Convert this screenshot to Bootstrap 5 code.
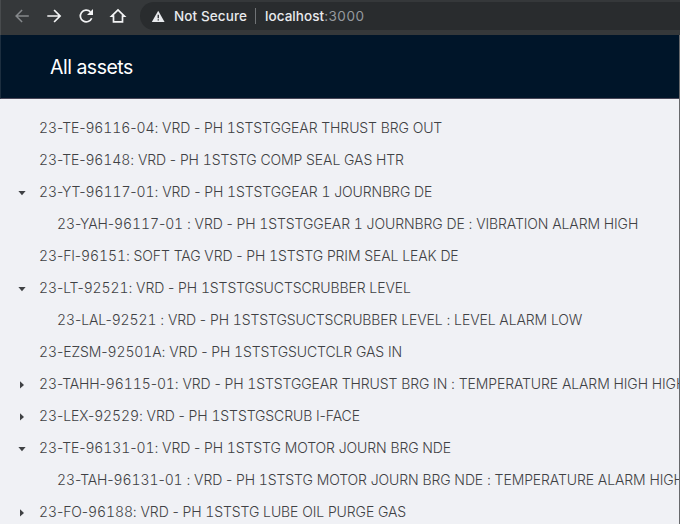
<!DOCTYPE html>
<html lang="en">
<head>
<meta charset="utf-8">
<meta name="viewport" content="width=device-width, initial-scale=1">
<title>All assets</title>
<link href="https://cdn.jsdelivr.net/npm/bootstrap@5.3.0/dist/css/bootstrap.min.css" rel="stylesheet">
<style>
body { font-family: Inter, "Liberation Sans", sans-serif; background: #f0f1f5; height: 524px; }
.browser-bar { height: 35px; background: #35383a; border-left: 1px solid #484b4d; padding: 2px 0 5px 10px; }
.browser-bar svg { display: block; flex: none; }
.nav-tools { width: 129px; gap: 8px; }
.address { background: #292c2e; border-radius: 14px 0 0 14px; padding-left: 10px; font-size: 13.5px; line-height: 28px; color: #e8eaed; }
.address .status { font-weight: 500; margin-left: 8px; width: 73px; letter-spacing: .1px; white-space: nowrap; }
.address .divider { width: 1px; height: 16px; background: #707376; margin: 0 9px 0 8px; }
.address .host { font-weight: 500; letter-spacing: .05px; }
.address .port { color: #969a9f; letter-spacing: .5px; }
.viewport-frame { border-right: 1px solid #68696c; }
.page-head { height: 64px; background: #001529; border-left: 1px solid #1c2e3f; border-bottom: 1px solid #484657; padding: 3px 0 0 49px; }
.page-head h1 { font-size: 19.5px; font-weight: 400; color: #fff; letter-spacing: -.5px; }
.tree { padding-top: 12.5px; color: #3f4144; font-size: 14px; line-height: 21px; font-weight: 300; letter-spacing: -.1px; }
.tree-item { height: 32px; white-space: nowrap; padding-left: 14px; }
.tree-item.child { padding-left: 32px; }
.num { font-variant-numeric: tabular-nums; }
.switcher { width: 16px; height: 16px; flex: none; margin-right: 9px; }
</style>
</head>
<body class="d-flex flex-column overflow-hidden">
<div class="browser-bar d-flex flex-shrink-0">
  <div class="nav-tools d-flex align-items-center flex-shrink-0">
    <svg width="24" height="24" viewBox="0 0 24 24" fill="none" stroke="#85888b" stroke-width="1.5"><path d="M17.8 12H5.3M11.1 6 5.1 12l6 6"/></svg>
    <svg width="24" height="24" viewBox="0 0 24 24" fill="none" stroke="#f3f4f5" stroke-width="1.7"><path d="M4.3 12h12.9M11.1 6l6 6-6 6"/></svg>
    <svg width="24" height="24" viewBox="0 0 24 24" fill="none" stroke="#f3f4f5" stroke-width="1.7"><path d="M16.7 14.2A5.9 5.9 0 1 1 15.4 7.8"/><path d="M18 4.9v6H12z" fill="#f3f4f5" stroke="none"/></svg>
    <svg width="24" height="24" viewBox="0 0 24 24" fill="none" stroke="#f3f4f5" stroke-width="1.7"><path d="M4.6 12.2 11 6l6.4 6.2h-1.9v5.6h-9v-5.6z"/></svg>
  </div>
  <div class="address d-flex align-items-center flex-grow-1">
    <svg width="16" height="16" viewBox="0 0 16 16"><path d="M8.2 2.8 14.6 14H1.8z" fill="#e8eaed"/><path d="M7.6 6.7h1.3v3.5H7.6zM7.6 11.2h1.3v1.3H7.6z" fill="#292c2e"/></svg>
    <span class="status">Not Secure</span><span class="divider"></span><span class="host">localhost</span><span class="port">:3000</span>
  </div>
</div>
<div class="viewport-frame flex-grow-1 overflow-hidden">
  <header class="page-head d-flex align-items-center"><h1 class="m-0">All assets</h1></header>
  <main class="tree">
    <div class="tree-item d-flex align-items-center"><span class="switcher"></span><span class="label">23-TE-96116-04: VRD - PH 1STSTGGEAR THRUST BRG OUT</span></div>
    <div class="tree-item d-flex align-items-center"><span class="switcher"></span><span class="label">23-TE-96148: VRD - PH 1STSTG COMP SEAL GAS HTR</span></div>
    <div class="tree-item d-flex align-items-center"><svg class="switcher" viewBox="0 0 16 16"><path d="M4.4 7h7.2L8 11.2z" fill="#3f4144"/></svg><span class="label">23-YT-96117-01: VRD - PH 1STSTGGEAR 1 JOURNBRG DE</span></div>
    <div class="tree-item child d-flex align-items-center"><span class="switcher"></span><span class="label">23-YAH-96117-01 : VRD - PH 1STSTGGEAR 1 JOURNBRG DE : VIBRATION ALARM HIGH</span></div>
    <div class="tree-item d-flex align-items-center"><span class="switcher"></span><span class="label">23-FI-96151: SOFT TAG VRD - PH 1STSTG PRIM SEAL LEAK DE</span></div>
    <div class="tree-item d-flex align-items-center"><svg class="switcher" viewBox="0 0 16 16"><path d="M4.4 7h7.2L8 11.2z" fill="#3f4144"/></svg><span class="label">23-LT-92521: VRD - PH 1STSTGSUCTSCRUBBER LEVEL</span></div>
    <div class="tree-item child d-flex align-items-center"><span class="switcher"></span><span class="label">23-LAL-92521 : VRD - PH 1STSTGSUCTSCRUBBER LEVEL : LEVEL ALARM LOW</span></div>
    <div class="tree-item d-flex align-items-center"><span class="switcher"></span><span class="label">23-EZSM-92501A: VRD - PH 1STSTGSUCTCLR GAS IN</span></div>
    <div class="tree-item d-flex align-items-center"><svg class="switcher" viewBox="0 0 16 16"><path d="M6 5.3v7.2l4-3.6z" fill="#3f4144"/></svg><span class="label">23-TAHH-96115-01: VRD - PH 1STSTGGEAR THRUST BRG IN : TEMPERATURE ALARM HIGH HIGH</span></div>
    <div class="tree-item d-flex align-items-center"><svg class="switcher" viewBox="0 0 16 16"><path d="M6 5.3v7.2l4-3.6z" fill="#3f4144"/></svg><span class="label">23-LEX-92529: VRD - PH 1STSTGSCRUB I-FACE</span></div>
    <div class="tree-item d-flex align-items-center"><svg class="switcher" viewBox="0 0 16 16"><path d="M4.4 7h7.2L8 11.2z" fill="#3f4144"/></svg><span class="label">23-TE-96131-01: VRD - PH 1STSTG MOTOR JOURN BRG NDE</span></div>
    <div class="tree-item child d-flex align-items-center"><span class="switcher"></span><span class="label">23-TAH-96131-01 : VRD - PH 1STSTG MOTOR JOURN BRG NDE : TEMPERATURE ALARM HIGH</span></div>
    <div class="tree-item d-flex align-items-center"><svg class="switcher" viewBox="0 0 16 16"><path d="M6 5.3v7.2l4-3.6z" fill="#3f4144"/></svg><span class="label">23-FO-96188: VRD - PH 1STSTG LUBE OIL PURGE GAS</span></div>
  </main>
</div>
<script src="https://cdn.jsdelivr.net/npm/bootstrap@5.3.0/dist/js/bootstrap.bundle.min.js"></script>
<script>
// Equal-width digits, with punctuation left proportional
document.querySelectorAll('.tree .label').forEach(el => {
  el.innerHTML = el.textContent.replace(/\d+/g, '<span class="num">$&</span>');
});
</script>
</body>
</html>
